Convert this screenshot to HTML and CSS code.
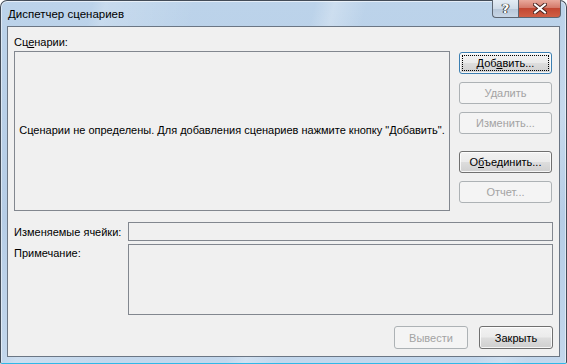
FILE: index.html
```html
<!DOCTYPE html>
<html lang="ru">
<head>
  <meta charset="UTF-8">
  <title>Диспетчер сценариев</title>
  <link rel="stylesheet" href="styles.css">
</head>
<body>
  <div class="window">
    <div class="titlebar">
      <span class="title">Диспетчер сценариев</span>
      <div class="caption-buttons">
        <button class="cap-btn help">?</button>
        <button class="cap-btn close">
          <svg width="14" height="11" viewBox="0 0 14 11">
            <path d="M2 1.5 L12 9.5 M12 1.5 L2 9.5" stroke="#4a2420" stroke-width="4" stroke-linecap="square"/>
            <path d="M2 1.5 L12 9.5 M12 1.5 L2 9.5" stroke="#fff" stroke-width="2" stroke-linecap="square"/>
          </svg>
        </button>
      </div>
    </div>

    <div class="client">
      <div class="label scen-label">Сц<u>е</u>нарии:</div>
      <div class="main-row">
        <div class="listbox">
          Сценарии не определены. Для добавления сценариев нажмите кнопку "Добавить".
        </div>
        <div class="side-buttons">
          <button class="btn default">Доб<u>а</u>вить...</button>
          <button class="btn" disabled>Удалить</button>
          <button class="btn" disabled>Изменить...</button>
          <button class="btn spaced">О<u>б</u>ъединить...</button>
          <button class="btn" disabled>Отчет...</button>
        </div>
      </div>

      <div class="field-row">
        <div class="label field-label">Изменяемые ячейки:</div>
        <div class="textbox"></div>
      </div>
      <div class="field-row note-row">
        <div class="label field-label">Примечание:</div>
        <div class="textbox note"></div>
      </div>

      <div class="footer">
        <button class="btn" disabled>Вывести</button>
        <button class="btn">Закрыть</button>
      </div>
    </div>
  </div>
</body>
</html>
```

FILE: styles.css
```css
body, html {
  margin: 0;
  padding: 0;
  font-family: "Liberation Sans", Arial, sans-serif;
  font-size: 11px;
  background: #fff;
}

.window {
  box-sizing: border-box;
  width: 567px;
  height: 364px;
  display: flex;
  flex-direction: column;
  padding: 0 6px 6px 6px;
  border: 1px solid #434c58;
  border-bottom-color: #2fb8e8;
  border-radius: 7px 7px 2px 2px;
  background:
    linear-gradient(104deg, transparent 0%, transparent 14%, rgba(255,255,255,0.18) 16%, transparent 30%, transparent 48%, rgba(255,255,255,0.25) 51%, transparent 56%, transparent 86%, rgba(255,255,255,0.2) 90%, transparent 94%),
    linear-gradient(180deg, #bcd3ea 0%, #b6cde6 60%, #c3d7ec 100%);
  box-shadow: inset 0 1px 0 rgba(255,255,255,0.6), inset 1px 0 0 rgba(255,255,255,0.5), inset -1px 0 0 rgba(255,255,255,0.5);
}

.titlebar {
  height: 25px;
  display: flex;
  justify-content: space-between;
  align-items: flex-start;
}

.title {
  margin-top: 7px;
  margin-left: 1px;
  color: #000;
  font-size: 11.5px;
}

.caption-buttons {
  display: flex;
  margin-top: -1px;
  margin-right: -1px;
}

.cap-btn {
  height: 18px;
  border: 1px solid #5d6672;
  border-top: none;
  padding: 0;
  display: flex;
  align-items: center;
  justify-content: center;
}

.help {
  width: 26px;
  border-radius: 0 0 0 4px;
  border-right: none;
  background: linear-gradient(180deg, #e4ecf4 0%, #cfdbe8 50%, #b6c6d8 51%, #c8d6e6 100%);
  color: #fff;
  font-family: "DejaVu Sans", sans-serif;
  font-size: 13px;
  font-weight: bold;
  text-shadow: 0 0 1px #333, 0 0 1px #333, 1px 0 0 #444, -1px 0 0 #444;
  line-height: 17px;
}

.close {
  width: 43px;
  border-radius: 0 0 4px 0;
  background: linear-gradient(180deg, #e9a99c 0%, #d47a6a 45%, #c24732 50%, #d05f45 100%);
}

.client {
  flex-grow: 1;
  display: flex;
  flex-direction: column;
  border: 1px solid #6b7684;
  background: #f0f0f0;
  padding: 8px 6px 7px 6px;
}

.label {
  color: #000;
  line-height: 14px;
  white-space: nowrap;
}

.scen-label {
  margin-bottom: 2px;
}

.main-row {
  display: flex;
  align-items: flex-start;
}

.listbox {
  box-sizing: border-box;
  width: 436px;
  height: 160px;
  border: 1px solid #82878f;
  display: flex;
  align-items: center;
  justify-content: center;
  text-align: center;
  white-space: nowrap;
  padding-bottom: 2px;
}

.side-buttons {
  display: flex;
  flex-direction: column;
  gap: 8px;
  margin-left: 9px;
  margin-top: 1px;
}

.side-buttons .btn {
  width: 93px;
  height: 22px;
}

.side-buttons .spaced {
  margin-top: 9px;
}

.btn {
  box-sizing: border-box;
  font-family: inherit;
  font-size: 11px;
  color: #000;
  padding: 0;
  border: 1px solid #707070;
  border-radius: 3px;
  background: linear-gradient(180deg, #f2f2f2 0%, #ebebeb 48%, #dddddd 52%, #cfcfcf 100%);
  box-shadow: inset 0 0 0 1px rgba(255,255,255,0.8);
}

.btn.default {
  border-color: #3c7fb1;
  outline: 1px dotted #000;
  outline-offset: -4px;
}

.btn:disabled {
  color: #a3a3a3;
  border-color: #adb2b5;
  background: #f4f4f4;
  box-shadow: none;
}

.field-row {
  display: flex;
  align-items: center;
  margin-top: 11px;
}

.field-label {
  width: 114px;
}

.textbox {
  box-sizing: border-box;
  flex-grow: 1;
  height: 19px;
  border: 1px solid #82878f;
}

.note-row {
  margin-top: 3px;
  align-items: flex-start;
}

.note-row .field-label {
  margin-top: 2px;
}

.textbox.note {
  height: 71px;
}

.footer {
  display: flex;
  justify-content: flex-end;
  gap: 11px;
  margin-top: 11px;
}

.footer .btn {
  width: 74px;
  height: 23px;
}
```
